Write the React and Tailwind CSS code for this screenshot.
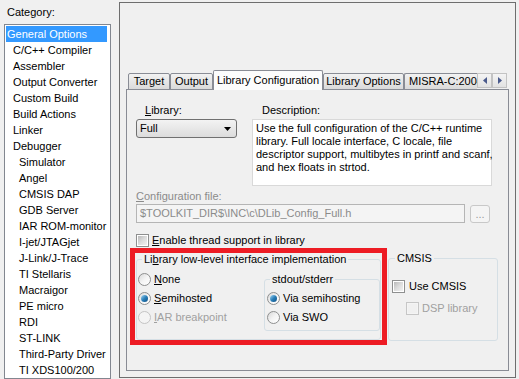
import React from "react";

const categories = [
  { label: "General Options", level: 0, selected: true },
  { label: "C/C++ Compiler", level: 1 },
  { label: "Assembler", level: 1 },
  { label: "Output Converter", level: 1 },
  { label: "Custom Build", level: 1 },
  { label: "Build Actions", level: 1 },
  { label: "Linker", level: 1 },
  { label: "Debugger", level: 1 },
  { label: "Simulator", level: 2 },
  { label: "Angel", level: 2 },
  { label: "CMSIS DAP", level: 2 },
  { label: "GDB Server", level: 2 },
  { label: "IAR ROM-monitor", level: 2 },
  { label: "I-jet/JTAGjet", level: 2 },
  { label: "J-Link/J-Trace", level: 2 },
  { label: "TI Stellaris", level: 2 },
  { label: "Macraigor", level: 2 },
  { label: "PE micro", level: 2 },
  { label: "RDI", level: 2 },
  { label: "ST-LINK", level: 2 },
  { label: "Third-Party Driver", level: 2 },
  { label: "TI XDS100/200", level: 2 },
];

const indent = ["pl-[1px]", "pl-[7px]", "pl-[13px]"];

function Radio({ checked, disabled }) {
  return (
    <span
      className={
        "w-[13px] h-[13px] rounded-full border flex items-center justify-center shrink-0 " +
        (disabled
          ? "border-[#c4c4c4] bg-[#f4f4f4]"
          : "border-[#8e8f8f] bg-gradient-to-br from-[#d8d8d8] via-[#f4f4f4] to-[#ffffff]")
      }
    >
      {checked && (
        <span className="w-[7px] h-[7px] rounded-full bg-gradient-to-br from-[#9ed8f5] via-[#2a7fb8] to-[#0d4f85]" />
      )}
    </span>
  );
}

function Check({ disabled }) {
  return (
    <span
      className={
        "w-[13px] h-[13px] border flex items-center justify-center shrink-0 " +
        (disabled ? "border-[#c6c6c6] bg-[#f4f4f4]" : "border-[#8e8f8f] bg-white")
      }
    >
      <span
        className={
          "w-[9px] h-[9px] " +
          (disabled
            ? "bg-[#f0f0f0]"
            : "bg-gradient-to-br from-[#b9b9b9] via-[#dcdcdc] to-[#f2f2f2]")
        }
      />
    </span>
  );
}

function Tab({ children, w, active }) {
  if (active) {
    return (
      <div
        className={`${w} h-[20px] border border-b-0 border-[#898c95] rounded-t-[2px] bg-[#fcfcfc] flex items-start justify-center pt-[3px] shrink-0`}
      >
        {children}
      </div>
    );
  }
  return (
    <div
      className={`${w} h-[17px] border border-[#898c95] rounded-t-[2px] bg-gradient-to-b from-[#f2f2f2] to-[#dadada] flex items-start justify-center pt-[1px] shrink-0 overflow-hidden whitespace-nowrap`}
    >
      {children}
    </div>
  );
}

export default function App() {
  return (
    <div
      className="w-[519px] h-[379px] bg-[#f0f0f0] flex overflow-hidden text-[11px] leading-[13px] text-black"
      style={{ fontFamily: '"Liberation Sans", Arial, sans-serif' }}
    >
      {/* left: category list */}
      <div className="w-[119px] shrink-0 flex flex-col">
        <div className="pl-[7px] pt-[6px] h-[26px]">Category:</div>
        <div className="ml-[4px] w-[107px] flex-1 border border-[#828790] bg-white pt-px px-px">
          {categories.map((c) => (
            <div
              key={c.label}
              className={
                "h-[16px] flex items-center whitespace-nowrap " +
                indent[c.level] +
                (c.selected ? " bg-[#3399ff] text-white mr-[2px]" : "")
              }
            >
              {c.label}
            </div>
          ))}
        </div>
      </div>

      {/* right: options frame */}
      <div className="mt-[2px] w-[397px] h-[376px] border border-[#6e6e6e] pt-[67px] px-[6px] pb-[6px] flex flex-col">
        {/* tabs */}
        <div className="flex items-end pl-[2px] -mb-px relative z-10 h-[20px]">
          <Tab w="w-[42px]">Target</Tab>
          <Tab w="w-[43px]">Output</Tab>
          <Tab w="w-[110px]" active>
            Library Configuration
          </Tab>
          <Tab w="w-[81px]">Library Options</Tab>
          <div className="w-[73px] h-[17px] border border-r-0 border-[#898c95] rounded-tl-[2px] bg-gradient-to-b from-[#f2f2f2] to-[#dadada] pt-[1px] pl-[4px] overflow-hidden whitespace-nowrap shrink-0">
            MISRA-C:2004
          </div>
          <div className="flex mb-[2px] shrink-0">
            <div className="w-[15px] h-[15px] border border-[#c3c3c3] bg-gradient-to-b from-[#f4f4f4] to-[#e2e2e2] flex items-center justify-center">
              <svg width="4" height="7" viewBox="0 0 4 7">
                <path d="M4 0 L0 3.5 L4 7 Z" fill="#4a5a8c" />
              </svg>
            </div>
            <div className="w-[15px] h-[15px] border border-[#c3c3c3] bg-gradient-to-b from-[#f4f4f4] to-[#e2e2e2] flex items-center justify-center">
              <svg width="4" height="7" viewBox="0 0 4 7">
                <path d="M0 0 L4 3.5 L0 7 Z" fill="#4a5a8c" />
              </svg>
            </div>
          </div>
        </div>

        {/* tab panel */}
        <div className="flex-1 border border-[#898c95] bg-[#f0f0f0] pl-[9px] pt-[14px]">
          <div className="flex gap-[15px]">
            <div className="flex flex-col w-[101px]">
              <div className="pl-[9px]">
                <span className="underline">L</span>ibrary:
              </div>
              <div className="mt-[2px] h-[19px] border border-[#707070] rounded-[3px] bg-gradient-to-b from-[#f3f3f3] to-[#dcdcdc] flex items-center justify-between pl-[3px] pr-[5px]">
                <span>Full</span>
                <svg width="7" height="4" viewBox="0 0 7 4">
                  <path d="M0 0 H7 L3.5 4 Z" fill="#000" />
                </svg>
              </div>
            </div>
            <div className="flex flex-col">
              <div className="pl-[10px]">Description:</div>
              <div className="mt-[2px] w-[240px] h-[67px] border border-[#d9d9d9] bg-white pl-[3px] pt-[2px] whitespace-nowrap">
                Use the full configuration of the C/C++ runtime
                <br />
                library. Full locale interface, C locale, file
                <br />
                descriptor support, multibytes in printf and scanf,
                <br />
                and hex floats in strtod.
              </div>
            </div>
          </div>

          <div className="mt-[4px] text-[#8b8b8b]">
            <span className="underline">C</span>onfiguration file:
          </div>
          <div className="mt-[1px] flex items-start">
            <div className="w-[329px] h-[19px] border border-[#b5b5b5] bg-[#f4f4f4] pl-[3px] flex items-center text-[#8b8b8b] whitespace-nowrap overflow-hidden">
              $TOOLKIT_DIR$\INC\c\DLib_Config_Full.h
            </div>
            <div className="ml-[5px] mt-[1px] w-[20px] h-[18px] border border-[#c8c8c8] rounded-[3px] bg-[#f4f4f4] flex items-center justify-center text-[#9a9a9a]">
              ...
            </div>
          </div>

          <div className="mt-[11px] flex items-center gap-[3px]">
            <Check />
            <span>
              <span className="underline">E</span>nable thread support in library
            </span>
          </div>

          {/* low-level interface + CMSIS */}
          <div className="-ml-[6px] mt-[1px] flex items-start">
            <div className="w-[257px] h-[97px] border-[5px] border-[#ed1c24] pl-px">
              <fieldset className="w-[245px] h-[87px] border border-[#d5dfe5] rounded-[3px] flex">
                <legend className="ml-[5px] px-[2px]">
                  Li<span className="underline">b</span>rary low-level interface implementation
                </legend>
                <div className="flex">
                  <div className="w-[127px] pt-[4px] pl-px flex flex-col">
                    <div className="h-[19px] flex items-center gap-[3px]">
                      <Radio />
                      <span>
                        <span className="underline">N</span>one
                      </span>
                    </div>
                    <div className="h-[19px] flex items-center gap-[3px]">
                      <Radio checked />
                      <span>
                        <span className="underline">S</span>emihosted
                      </span>
                    </div>
                    <div className="h-[19px] flex items-center gap-[3px] text-[#a0a0a0]">
                      <Radio disabled />
                      <span>
                        <span className="underline">I</span>AR breakpoint
                      </span>
                    </div>
                  </div>
                  <fieldset className="mt-[7px] w-[116px] h-[58px] border border-[#d5dfe5] rounded-[3px]">
                    <legend className="ml-[5px] px-[2px]">stdout/stderr</legend>
                    <div className="pt-[3px] pl-[2px] flex flex-col">
                      <div className="h-[19px] flex items-center gap-[3px]">
                        <Radio checked />
                        <span>Via semihosting</span>
                      </div>
                      <div className="h-[19px] flex items-center gap-[3px]">
                        <Radio />
                        <span>Via SWO</span>
                      </div>
                    </div>
                  </fieldset>
                </div>
              </fieldset>
            </div>

            <fieldset className="ml-px mt-[4px] w-[110px] h-[89px] border border-[#d5dfe5] rounded-[3px]">
              <legend className="ml-[6px] px-[2px]">CMSIS</legend>
              <div className="mt-[13px] pl-[3px] h-[16px] flex items-center gap-[4px]">
                <Check />
                <span>Use CMSIS</span>
              </div>
              <div className="mt-[6px] pl-[17px] h-[16px] flex items-center gap-[3px] text-[#a0a0a0]">
                <Check disabled />
                <span>DSP library</span>
              </div>
            </fieldset>
          </div>
        </div>
      </div>
    </div>
  );
}
